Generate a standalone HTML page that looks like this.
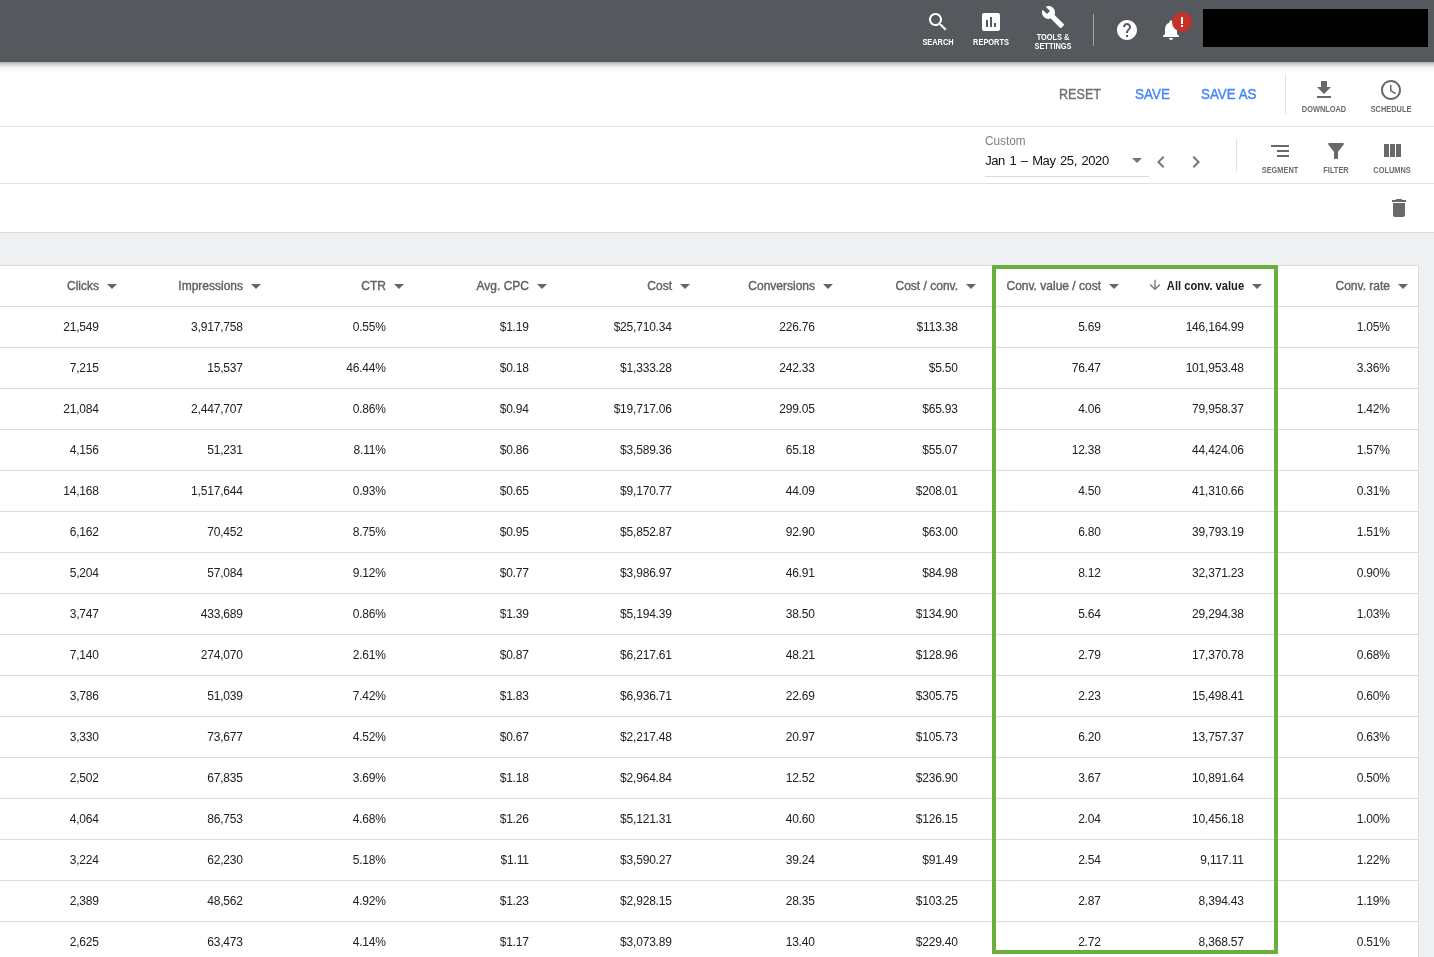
<!DOCTYPE html>
<html><head><meta charset="utf-8">
<style>
html,body{margin:0;padding:0;}
body{width:1434px;height:957px;overflow:hidden;position:relative;background:#fff;font-family:"Liberation Sans",sans-serif;}
.t{position:absolute;white-space:nowrap;}
.ic{position:absolute;display:block;}
.b{position:absolute;}
.med{-webkit-text-stroke:0.2px currentColor;}
#wrap{position:absolute;left:0;top:0;width:1434px;height:957px;overflow:hidden;will-change:transform;background:#fff;}
</style></head><body><div id="wrap">
<div class="b" style="left:0;top:233px;width:1434px;height:724px;background:#eff0f2;"></div>
<div class="b" style="left:0;top:126px;width:1434px;height:1px;background:#e0e0e0;"></div>
<div class="b" style="left:0;top:183px;width:1434px;height:1px;background:#e0e0e0;"></div>
<div class="b" style="left:0;top:232px;width:1434px;height:1px;background:#dadce0;"></div>
<div class="b" style="left:-2px;top:265px;width:1419px;height:700px;background:#fff;border:1px solid #dadce0;"></div>
<div class="b" style="left:0;top:306px;width:1418px;height:1px;background:#dadce0;"></div>
<div class="b" style="left:0;top:347px;width:1418px;height:1px;background:#dadce0;"></div>
<div class="b" style="left:0;top:388px;width:1418px;height:1px;background:#dadce0;"></div>
<div class="b" style="left:0;top:429px;width:1418px;height:1px;background:#dadce0;"></div>
<div class="b" style="left:0;top:470px;width:1418px;height:1px;background:#dadce0;"></div>
<div class="b" style="left:0;top:511px;width:1418px;height:1px;background:#dadce0;"></div>
<div class="b" style="left:0;top:552px;width:1418px;height:1px;background:#dadce0;"></div>
<div class="b" style="left:0;top:593px;width:1418px;height:1px;background:#dadce0;"></div>
<div class="b" style="left:0;top:634px;width:1418px;height:1px;background:#dadce0;"></div>
<div class="b" style="left:0;top:675px;width:1418px;height:1px;background:#dadce0;"></div>
<div class="b" style="left:0;top:716px;width:1418px;height:1px;background:#dadce0;"></div>
<div class="b" style="left:0;top:757px;width:1418px;height:1px;background:#dadce0;"></div>
<div class="b" style="left:0;top:798px;width:1418px;height:1px;background:#dadce0;"></div>
<div class="b" style="left:0;top:839px;width:1418px;height:1px;background:#dadce0;"></div>
<div class="b" style="left:0;top:880px;width:1418px;height:1px;background:#dadce0;"></div>
<div class="b" style="left:0;top:921px;width:1418px;height:1px;background:#dadce0;"></div>
<div class="t" style="top:279.84px;font-size:12px;line-height:12px;color:#5f6368;right:1335px;text-align:right;-webkit-text-stroke:0.4px currentColor;">Clicks</div>
<svg class="ic" style="left:99.7px;top:274px;width:24px;height:24px;" viewBox="0 0 24 24"><path fill="#666" d="M7 10l5 5 5-5z"/></svg>
<div class="t" style="top:279.84px;font-size:12px;line-height:12px;color:#5f6368;right:1191px;text-align:right;-webkit-text-stroke:0.4px currentColor;">Impressions</div>
<svg class="ic" style="left:243.7px;top:274px;width:24px;height:24px;" viewBox="0 0 24 24"><path fill="#666" d="M7 10l5 5 5-5z"/></svg>
<div class="t" style="top:279.84px;font-size:12px;line-height:12px;color:#5f6368;right:1048px;text-align:right;-webkit-text-stroke:0.4px currentColor;">CTR</div>
<svg class="ic" style="left:386.7px;top:274px;width:24px;height:24px;" viewBox="0 0 24 24"><path fill="#666" d="M7 10l5 5 5-5z"/></svg>
<div class="t" style="top:279.84px;font-size:12px;line-height:12px;color:#5f6368;right:905px;text-align:right;-webkit-text-stroke:0.4px currentColor;">Avg. CPC</div>
<svg class="ic" style="left:529.7px;top:274px;width:24px;height:24px;" viewBox="0 0 24 24"><path fill="#666" d="M7 10l5 5 5-5z"/></svg>
<div class="t" style="top:279.84px;font-size:12px;line-height:12px;color:#5f6368;right:762px;text-align:right;-webkit-text-stroke:0.4px currentColor;">Cost</div>
<svg class="ic" style="left:672.7px;top:274px;width:24px;height:24px;" viewBox="0 0 24 24"><path fill="#666" d="M7 10l5 5 5-5z"/></svg>
<div class="t" style="top:279.84px;font-size:12px;line-height:12px;color:#5f6368;right:619px;text-align:right;-webkit-text-stroke:0.4px currentColor;">Conversions</div>
<svg class="ic" style="left:815.7px;top:274px;width:24px;height:24px;" viewBox="0 0 24 24"><path fill="#666" d="M7 10l5 5 5-5z"/></svg>
<div class="t" style="top:279.84px;font-size:12px;line-height:12px;color:#5f6368;right:476px;text-align:right;-webkit-text-stroke:0.4px currentColor;">Cost / conv.</div>
<svg class="ic" style="left:958.7px;top:274px;width:24px;height:24px;" viewBox="0 0 24 24"><path fill="#666" d="M7 10l5 5 5-5z"/></svg>
<div class="t" style="top:279.84px;font-size:12px;line-height:12px;color:#5f6368;right:333px;text-align:right;-webkit-text-stroke:0.4px currentColor;">Conv. value / cost</div>
<svg class="ic" style="left:1101.7px;top:274px;width:24px;height:24px;" viewBox="0 0 24 24"><path fill="#666" d="M7 10l5 5 5-5z"/></svg>
<div class="t" style="top:279.84px;font-size:12px;line-height:12px;color:#202124;font-weight:bold;right:190px;text-align:right;transform:scaleX(0.93);transform-origin:right 50%;">All conv. value</div>
<svg class="ic" style="left:1146.6px;top:276.8px;width:16px;height:16px;" viewBox="0 0 24 24"><path fill="#757575" d="M20 12l-1.41-1.41L13 16.17V4h-2v12.17l-5.58-5.59L4 12l8 8 8-8z"/></svg>
<svg class="ic" style="left:1244.7px;top:274px;width:24px;height:24px;" viewBox="0 0 24 24"><path fill="#666" d="M7 10l5 5 5-5z"/></svg>
<div class="t" style="top:279.84px;font-size:12px;line-height:12px;color:#5f6368;right:44px;text-align:right;-webkit-text-stroke:0.4px currentColor;">Conv. rate</div>
<svg class="ic" style="left:1390.7px;top:274px;width:24px;height:24px;" viewBox="0 0 24 24"><path fill="#666" d="M7 10l5 5 5-5z"/></svg>
<div class="t" style="top:320.84px;font-size:12px;line-height:12px;color:#202124;letter-spacing:-0.2px;right:1335.3px;text-align:right;">21,549</div>
<div class="t" style="top:320.84px;font-size:12px;line-height:12px;color:#202124;letter-spacing:-0.2px;right:1191.3px;text-align:right;">3,917,758</div>
<div class="t" style="top:320.84px;font-size:12px;line-height:12px;color:#202124;letter-spacing:-0.2px;right:1048.3px;text-align:right;">0.55%</div>
<div class="t" style="top:320.84px;font-size:12px;line-height:12px;color:#202124;letter-spacing:-0.2px;right:905.3px;text-align:right;">$1.19</div>
<div class="t" style="top:320.84px;font-size:12px;line-height:12px;color:#202124;letter-spacing:-0.2px;right:762.3px;text-align:right;">$25,710.34</div>
<div class="t" style="top:320.84px;font-size:12px;line-height:12px;color:#202124;letter-spacing:-0.2px;right:619.3px;text-align:right;">226.76</div>
<div class="t" style="top:320.84px;font-size:12px;line-height:12px;color:#202124;letter-spacing:-0.2px;right:476.29999999999995px;text-align:right;">$113.38</div>
<div class="t" style="top:320.84px;font-size:12px;line-height:12px;color:#202124;letter-spacing:-0.2px;right:333.29999999999995px;text-align:right;">5.69</div>
<div class="t" style="top:320.84px;font-size:12px;line-height:12px;color:#202124;letter-spacing:-0.2px;right:190.29999999999995px;text-align:right;">146,164.99</div>
<div class="t" style="top:320.84px;font-size:12px;line-height:12px;color:#202124;letter-spacing:-0.2px;right:44.299999999999955px;text-align:right;">1.05%</div>
<div class="t" style="top:361.84px;font-size:12px;line-height:12px;color:#202124;letter-spacing:-0.2px;right:1335.3px;text-align:right;">7,215</div>
<div class="t" style="top:361.84px;font-size:12px;line-height:12px;color:#202124;letter-spacing:-0.2px;right:1191.3px;text-align:right;">15,537</div>
<div class="t" style="top:361.84px;font-size:12px;line-height:12px;color:#202124;letter-spacing:-0.2px;right:1048.3px;text-align:right;">46.44%</div>
<div class="t" style="top:361.84px;font-size:12px;line-height:12px;color:#202124;letter-spacing:-0.2px;right:905.3px;text-align:right;">$0.18</div>
<div class="t" style="top:361.84px;font-size:12px;line-height:12px;color:#202124;letter-spacing:-0.2px;right:762.3px;text-align:right;">$1,333.28</div>
<div class="t" style="top:361.84px;font-size:12px;line-height:12px;color:#202124;letter-spacing:-0.2px;right:619.3px;text-align:right;">242.33</div>
<div class="t" style="top:361.84px;font-size:12px;line-height:12px;color:#202124;letter-spacing:-0.2px;right:476.29999999999995px;text-align:right;">$5.50</div>
<div class="t" style="top:361.84px;font-size:12px;line-height:12px;color:#202124;letter-spacing:-0.2px;right:333.29999999999995px;text-align:right;">76.47</div>
<div class="t" style="top:361.84px;font-size:12px;line-height:12px;color:#202124;letter-spacing:-0.2px;right:190.29999999999995px;text-align:right;">101,953.48</div>
<div class="t" style="top:361.84px;font-size:12px;line-height:12px;color:#202124;letter-spacing:-0.2px;right:44.299999999999955px;text-align:right;">3.36%</div>
<div class="t" style="top:402.84px;font-size:12px;line-height:12px;color:#202124;letter-spacing:-0.2px;right:1335.3px;text-align:right;">21,084</div>
<div class="t" style="top:402.84px;font-size:12px;line-height:12px;color:#202124;letter-spacing:-0.2px;right:1191.3px;text-align:right;">2,447,707</div>
<div class="t" style="top:402.84px;font-size:12px;line-height:12px;color:#202124;letter-spacing:-0.2px;right:1048.3px;text-align:right;">0.86%</div>
<div class="t" style="top:402.84px;font-size:12px;line-height:12px;color:#202124;letter-spacing:-0.2px;right:905.3px;text-align:right;">$0.94</div>
<div class="t" style="top:402.84px;font-size:12px;line-height:12px;color:#202124;letter-spacing:-0.2px;right:762.3px;text-align:right;">$19,717.06</div>
<div class="t" style="top:402.84px;font-size:12px;line-height:12px;color:#202124;letter-spacing:-0.2px;right:619.3px;text-align:right;">299.05</div>
<div class="t" style="top:402.84px;font-size:12px;line-height:12px;color:#202124;letter-spacing:-0.2px;right:476.29999999999995px;text-align:right;">$65.93</div>
<div class="t" style="top:402.84px;font-size:12px;line-height:12px;color:#202124;letter-spacing:-0.2px;right:333.29999999999995px;text-align:right;">4.06</div>
<div class="t" style="top:402.84px;font-size:12px;line-height:12px;color:#202124;letter-spacing:-0.2px;right:190.29999999999995px;text-align:right;">79,958.37</div>
<div class="t" style="top:402.84px;font-size:12px;line-height:12px;color:#202124;letter-spacing:-0.2px;right:44.299999999999955px;text-align:right;">1.42%</div>
<div class="t" style="top:443.84px;font-size:12px;line-height:12px;color:#202124;letter-spacing:-0.2px;right:1335.3px;text-align:right;">4,156</div>
<div class="t" style="top:443.84px;font-size:12px;line-height:12px;color:#202124;letter-spacing:-0.2px;right:1191.3px;text-align:right;">51,231</div>
<div class="t" style="top:443.84px;font-size:12px;line-height:12px;color:#202124;letter-spacing:-0.2px;right:1048.3px;text-align:right;">8.11%</div>
<div class="t" style="top:443.84px;font-size:12px;line-height:12px;color:#202124;letter-spacing:-0.2px;right:905.3px;text-align:right;">$0.86</div>
<div class="t" style="top:443.84px;font-size:12px;line-height:12px;color:#202124;letter-spacing:-0.2px;right:762.3px;text-align:right;">$3,589.36</div>
<div class="t" style="top:443.84px;font-size:12px;line-height:12px;color:#202124;letter-spacing:-0.2px;right:619.3px;text-align:right;">65.18</div>
<div class="t" style="top:443.84px;font-size:12px;line-height:12px;color:#202124;letter-spacing:-0.2px;right:476.29999999999995px;text-align:right;">$55.07</div>
<div class="t" style="top:443.84px;font-size:12px;line-height:12px;color:#202124;letter-spacing:-0.2px;right:333.29999999999995px;text-align:right;">12.38</div>
<div class="t" style="top:443.84px;font-size:12px;line-height:12px;color:#202124;letter-spacing:-0.2px;right:190.29999999999995px;text-align:right;">44,424.06</div>
<div class="t" style="top:443.84px;font-size:12px;line-height:12px;color:#202124;letter-spacing:-0.2px;right:44.299999999999955px;text-align:right;">1.57%</div>
<div class="t" style="top:484.84px;font-size:12px;line-height:12px;color:#202124;letter-spacing:-0.2px;right:1335.3px;text-align:right;">14,168</div>
<div class="t" style="top:484.84px;font-size:12px;line-height:12px;color:#202124;letter-spacing:-0.2px;right:1191.3px;text-align:right;">1,517,644</div>
<div class="t" style="top:484.84px;font-size:12px;line-height:12px;color:#202124;letter-spacing:-0.2px;right:1048.3px;text-align:right;">0.93%</div>
<div class="t" style="top:484.84px;font-size:12px;line-height:12px;color:#202124;letter-spacing:-0.2px;right:905.3px;text-align:right;">$0.65</div>
<div class="t" style="top:484.84px;font-size:12px;line-height:12px;color:#202124;letter-spacing:-0.2px;right:762.3px;text-align:right;">$9,170.77</div>
<div class="t" style="top:484.84px;font-size:12px;line-height:12px;color:#202124;letter-spacing:-0.2px;right:619.3px;text-align:right;">44.09</div>
<div class="t" style="top:484.84px;font-size:12px;line-height:12px;color:#202124;letter-spacing:-0.2px;right:476.29999999999995px;text-align:right;">$208.01</div>
<div class="t" style="top:484.84px;font-size:12px;line-height:12px;color:#202124;letter-spacing:-0.2px;right:333.29999999999995px;text-align:right;">4.50</div>
<div class="t" style="top:484.84px;font-size:12px;line-height:12px;color:#202124;letter-spacing:-0.2px;right:190.29999999999995px;text-align:right;">41,310.66</div>
<div class="t" style="top:484.84px;font-size:12px;line-height:12px;color:#202124;letter-spacing:-0.2px;right:44.299999999999955px;text-align:right;">0.31%</div>
<div class="t" style="top:525.84px;font-size:12px;line-height:12px;color:#202124;letter-spacing:-0.2px;right:1335.3px;text-align:right;">6,162</div>
<div class="t" style="top:525.84px;font-size:12px;line-height:12px;color:#202124;letter-spacing:-0.2px;right:1191.3px;text-align:right;">70,452</div>
<div class="t" style="top:525.84px;font-size:12px;line-height:12px;color:#202124;letter-spacing:-0.2px;right:1048.3px;text-align:right;">8.75%</div>
<div class="t" style="top:525.84px;font-size:12px;line-height:12px;color:#202124;letter-spacing:-0.2px;right:905.3px;text-align:right;">$0.95</div>
<div class="t" style="top:525.84px;font-size:12px;line-height:12px;color:#202124;letter-spacing:-0.2px;right:762.3px;text-align:right;">$5,852.87</div>
<div class="t" style="top:525.84px;font-size:12px;line-height:12px;color:#202124;letter-spacing:-0.2px;right:619.3px;text-align:right;">92.90</div>
<div class="t" style="top:525.84px;font-size:12px;line-height:12px;color:#202124;letter-spacing:-0.2px;right:476.29999999999995px;text-align:right;">$63.00</div>
<div class="t" style="top:525.84px;font-size:12px;line-height:12px;color:#202124;letter-spacing:-0.2px;right:333.29999999999995px;text-align:right;">6.80</div>
<div class="t" style="top:525.84px;font-size:12px;line-height:12px;color:#202124;letter-spacing:-0.2px;right:190.29999999999995px;text-align:right;">39,793.19</div>
<div class="t" style="top:525.84px;font-size:12px;line-height:12px;color:#202124;letter-spacing:-0.2px;right:44.299999999999955px;text-align:right;">1.51%</div>
<div class="t" style="top:566.84px;font-size:12px;line-height:12px;color:#202124;letter-spacing:-0.2px;right:1335.3px;text-align:right;">5,204</div>
<div class="t" style="top:566.84px;font-size:12px;line-height:12px;color:#202124;letter-spacing:-0.2px;right:1191.3px;text-align:right;">57,084</div>
<div class="t" style="top:566.84px;font-size:12px;line-height:12px;color:#202124;letter-spacing:-0.2px;right:1048.3px;text-align:right;">9.12%</div>
<div class="t" style="top:566.84px;font-size:12px;line-height:12px;color:#202124;letter-spacing:-0.2px;right:905.3px;text-align:right;">$0.77</div>
<div class="t" style="top:566.84px;font-size:12px;line-height:12px;color:#202124;letter-spacing:-0.2px;right:762.3px;text-align:right;">$3,986.97</div>
<div class="t" style="top:566.84px;font-size:12px;line-height:12px;color:#202124;letter-spacing:-0.2px;right:619.3px;text-align:right;">46.91</div>
<div class="t" style="top:566.84px;font-size:12px;line-height:12px;color:#202124;letter-spacing:-0.2px;right:476.29999999999995px;text-align:right;">$84.98</div>
<div class="t" style="top:566.84px;font-size:12px;line-height:12px;color:#202124;letter-spacing:-0.2px;right:333.29999999999995px;text-align:right;">8.12</div>
<div class="t" style="top:566.84px;font-size:12px;line-height:12px;color:#202124;letter-spacing:-0.2px;right:190.29999999999995px;text-align:right;">32,371.23</div>
<div class="t" style="top:566.84px;font-size:12px;line-height:12px;color:#202124;letter-spacing:-0.2px;right:44.299999999999955px;text-align:right;">0.90%</div>
<div class="t" style="top:607.84px;font-size:12px;line-height:12px;color:#202124;letter-spacing:-0.2px;right:1335.3px;text-align:right;">3,747</div>
<div class="t" style="top:607.84px;font-size:12px;line-height:12px;color:#202124;letter-spacing:-0.2px;right:1191.3px;text-align:right;">433,689</div>
<div class="t" style="top:607.84px;font-size:12px;line-height:12px;color:#202124;letter-spacing:-0.2px;right:1048.3px;text-align:right;">0.86%</div>
<div class="t" style="top:607.84px;font-size:12px;line-height:12px;color:#202124;letter-spacing:-0.2px;right:905.3px;text-align:right;">$1.39</div>
<div class="t" style="top:607.84px;font-size:12px;line-height:12px;color:#202124;letter-spacing:-0.2px;right:762.3px;text-align:right;">$5,194.39</div>
<div class="t" style="top:607.84px;font-size:12px;line-height:12px;color:#202124;letter-spacing:-0.2px;right:619.3px;text-align:right;">38.50</div>
<div class="t" style="top:607.84px;font-size:12px;line-height:12px;color:#202124;letter-spacing:-0.2px;right:476.29999999999995px;text-align:right;">$134.90</div>
<div class="t" style="top:607.84px;font-size:12px;line-height:12px;color:#202124;letter-spacing:-0.2px;right:333.29999999999995px;text-align:right;">5.64</div>
<div class="t" style="top:607.84px;font-size:12px;line-height:12px;color:#202124;letter-spacing:-0.2px;right:190.29999999999995px;text-align:right;">29,294.38</div>
<div class="t" style="top:607.84px;font-size:12px;line-height:12px;color:#202124;letter-spacing:-0.2px;right:44.299999999999955px;text-align:right;">1.03%</div>
<div class="t" style="top:648.84px;font-size:12px;line-height:12px;color:#202124;letter-spacing:-0.2px;right:1335.3px;text-align:right;">7,140</div>
<div class="t" style="top:648.84px;font-size:12px;line-height:12px;color:#202124;letter-spacing:-0.2px;right:1191.3px;text-align:right;">274,070</div>
<div class="t" style="top:648.84px;font-size:12px;line-height:12px;color:#202124;letter-spacing:-0.2px;right:1048.3px;text-align:right;">2.61%</div>
<div class="t" style="top:648.84px;font-size:12px;line-height:12px;color:#202124;letter-spacing:-0.2px;right:905.3px;text-align:right;">$0.87</div>
<div class="t" style="top:648.84px;font-size:12px;line-height:12px;color:#202124;letter-spacing:-0.2px;right:762.3px;text-align:right;">$6,217.61</div>
<div class="t" style="top:648.84px;font-size:12px;line-height:12px;color:#202124;letter-spacing:-0.2px;right:619.3px;text-align:right;">48.21</div>
<div class="t" style="top:648.84px;font-size:12px;line-height:12px;color:#202124;letter-spacing:-0.2px;right:476.29999999999995px;text-align:right;">$128.96</div>
<div class="t" style="top:648.84px;font-size:12px;line-height:12px;color:#202124;letter-spacing:-0.2px;right:333.29999999999995px;text-align:right;">2.79</div>
<div class="t" style="top:648.84px;font-size:12px;line-height:12px;color:#202124;letter-spacing:-0.2px;right:190.29999999999995px;text-align:right;">17,370.78</div>
<div class="t" style="top:648.84px;font-size:12px;line-height:12px;color:#202124;letter-spacing:-0.2px;right:44.299999999999955px;text-align:right;">0.68%</div>
<div class="t" style="top:689.84px;font-size:12px;line-height:12px;color:#202124;letter-spacing:-0.2px;right:1335.3px;text-align:right;">3,786</div>
<div class="t" style="top:689.84px;font-size:12px;line-height:12px;color:#202124;letter-spacing:-0.2px;right:1191.3px;text-align:right;">51,039</div>
<div class="t" style="top:689.84px;font-size:12px;line-height:12px;color:#202124;letter-spacing:-0.2px;right:1048.3px;text-align:right;">7.42%</div>
<div class="t" style="top:689.84px;font-size:12px;line-height:12px;color:#202124;letter-spacing:-0.2px;right:905.3px;text-align:right;">$1.83</div>
<div class="t" style="top:689.84px;font-size:12px;line-height:12px;color:#202124;letter-spacing:-0.2px;right:762.3px;text-align:right;">$6,936.71</div>
<div class="t" style="top:689.84px;font-size:12px;line-height:12px;color:#202124;letter-spacing:-0.2px;right:619.3px;text-align:right;">22.69</div>
<div class="t" style="top:689.84px;font-size:12px;line-height:12px;color:#202124;letter-spacing:-0.2px;right:476.29999999999995px;text-align:right;">$305.75</div>
<div class="t" style="top:689.84px;font-size:12px;line-height:12px;color:#202124;letter-spacing:-0.2px;right:333.29999999999995px;text-align:right;">2.23</div>
<div class="t" style="top:689.84px;font-size:12px;line-height:12px;color:#202124;letter-spacing:-0.2px;right:190.29999999999995px;text-align:right;">15,498.41</div>
<div class="t" style="top:689.84px;font-size:12px;line-height:12px;color:#202124;letter-spacing:-0.2px;right:44.299999999999955px;text-align:right;">0.60%</div>
<div class="t" style="top:730.84px;font-size:12px;line-height:12px;color:#202124;letter-spacing:-0.2px;right:1335.3px;text-align:right;">3,330</div>
<div class="t" style="top:730.84px;font-size:12px;line-height:12px;color:#202124;letter-spacing:-0.2px;right:1191.3px;text-align:right;">73,677</div>
<div class="t" style="top:730.84px;font-size:12px;line-height:12px;color:#202124;letter-spacing:-0.2px;right:1048.3px;text-align:right;">4.52%</div>
<div class="t" style="top:730.84px;font-size:12px;line-height:12px;color:#202124;letter-spacing:-0.2px;right:905.3px;text-align:right;">$0.67</div>
<div class="t" style="top:730.84px;font-size:12px;line-height:12px;color:#202124;letter-spacing:-0.2px;right:762.3px;text-align:right;">$2,217.48</div>
<div class="t" style="top:730.84px;font-size:12px;line-height:12px;color:#202124;letter-spacing:-0.2px;right:619.3px;text-align:right;">20.97</div>
<div class="t" style="top:730.84px;font-size:12px;line-height:12px;color:#202124;letter-spacing:-0.2px;right:476.29999999999995px;text-align:right;">$105.73</div>
<div class="t" style="top:730.84px;font-size:12px;line-height:12px;color:#202124;letter-spacing:-0.2px;right:333.29999999999995px;text-align:right;">6.20</div>
<div class="t" style="top:730.84px;font-size:12px;line-height:12px;color:#202124;letter-spacing:-0.2px;right:190.29999999999995px;text-align:right;">13,757.37</div>
<div class="t" style="top:730.84px;font-size:12px;line-height:12px;color:#202124;letter-spacing:-0.2px;right:44.299999999999955px;text-align:right;">0.63%</div>
<div class="t" style="top:771.84px;font-size:12px;line-height:12px;color:#202124;letter-spacing:-0.2px;right:1335.3px;text-align:right;">2,502</div>
<div class="t" style="top:771.84px;font-size:12px;line-height:12px;color:#202124;letter-spacing:-0.2px;right:1191.3px;text-align:right;">67,835</div>
<div class="t" style="top:771.84px;font-size:12px;line-height:12px;color:#202124;letter-spacing:-0.2px;right:1048.3px;text-align:right;">3.69%</div>
<div class="t" style="top:771.84px;font-size:12px;line-height:12px;color:#202124;letter-spacing:-0.2px;right:905.3px;text-align:right;">$1.18</div>
<div class="t" style="top:771.84px;font-size:12px;line-height:12px;color:#202124;letter-spacing:-0.2px;right:762.3px;text-align:right;">$2,964.84</div>
<div class="t" style="top:771.84px;font-size:12px;line-height:12px;color:#202124;letter-spacing:-0.2px;right:619.3px;text-align:right;">12.52</div>
<div class="t" style="top:771.84px;font-size:12px;line-height:12px;color:#202124;letter-spacing:-0.2px;right:476.29999999999995px;text-align:right;">$236.90</div>
<div class="t" style="top:771.84px;font-size:12px;line-height:12px;color:#202124;letter-spacing:-0.2px;right:333.29999999999995px;text-align:right;">3.67</div>
<div class="t" style="top:771.84px;font-size:12px;line-height:12px;color:#202124;letter-spacing:-0.2px;right:190.29999999999995px;text-align:right;">10,891.64</div>
<div class="t" style="top:771.84px;font-size:12px;line-height:12px;color:#202124;letter-spacing:-0.2px;right:44.299999999999955px;text-align:right;">0.50%</div>
<div class="t" style="top:812.84px;font-size:12px;line-height:12px;color:#202124;letter-spacing:-0.2px;right:1335.3px;text-align:right;">4,064</div>
<div class="t" style="top:812.84px;font-size:12px;line-height:12px;color:#202124;letter-spacing:-0.2px;right:1191.3px;text-align:right;">86,753</div>
<div class="t" style="top:812.84px;font-size:12px;line-height:12px;color:#202124;letter-spacing:-0.2px;right:1048.3px;text-align:right;">4.68%</div>
<div class="t" style="top:812.84px;font-size:12px;line-height:12px;color:#202124;letter-spacing:-0.2px;right:905.3px;text-align:right;">$1.26</div>
<div class="t" style="top:812.84px;font-size:12px;line-height:12px;color:#202124;letter-spacing:-0.2px;right:762.3px;text-align:right;">$5,121.31</div>
<div class="t" style="top:812.84px;font-size:12px;line-height:12px;color:#202124;letter-spacing:-0.2px;right:619.3px;text-align:right;">40.60</div>
<div class="t" style="top:812.84px;font-size:12px;line-height:12px;color:#202124;letter-spacing:-0.2px;right:476.29999999999995px;text-align:right;">$126.15</div>
<div class="t" style="top:812.84px;font-size:12px;line-height:12px;color:#202124;letter-spacing:-0.2px;right:333.29999999999995px;text-align:right;">2.04</div>
<div class="t" style="top:812.84px;font-size:12px;line-height:12px;color:#202124;letter-spacing:-0.2px;right:190.29999999999995px;text-align:right;">10,456.18</div>
<div class="t" style="top:812.84px;font-size:12px;line-height:12px;color:#202124;letter-spacing:-0.2px;right:44.299999999999955px;text-align:right;">1.00%</div>
<div class="t" style="top:853.84px;font-size:12px;line-height:12px;color:#202124;letter-spacing:-0.2px;right:1335.3px;text-align:right;">3,224</div>
<div class="t" style="top:853.84px;font-size:12px;line-height:12px;color:#202124;letter-spacing:-0.2px;right:1191.3px;text-align:right;">62,230</div>
<div class="t" style="top:853.84px;font-size:12px;line-height:12px;color:#202124;letter-spacing:-0.2px;right:1048.3px;text-align:right;">5.18%</div>
<div class="t" style="top:853.84px;font-size:12px;line-height:12px;color:#202124;letter-spacing:-0.2px;right:905.3px;text-align:right;">$1.11</div>
<div class="t" style="top:853.84px;font-size:12px;line-height:12px;color:#202124;letter-spacing:-0.2px;right:762.3px;text-align:right;">$3,590.27</div>
<div class="t" style="top:853.84px;font-size:12px;line-height:12px;color:#202124;letter-spacing:-0.2px;right:619.3px;text-align:right;">39.24</div>
<div class="t" style="top:853.84px;font-size:12px;line-height:12px;color:#202124;letter-spacing:-0.2px;right:476.29999999999995px;text-align:right;">$91.49</div>
<div class="t" style="top:853.84px;font-size:12px;line-height:12px;color:#202124;letter-spacing:-0.2px;right:333.29999999999995px;text-align:right;">2.54</div>
<div class="t" style="top:853.84px;font-size:12px;line-height:12px;color:#202124;letter-spacing:-0.2px;right:190.29999999999995px;text-align:right;">9,117.11</div>
<div class="t" style="top:853.84px;font-size:12px;line-height:12px;color:#202124;letter-spacing:-0.2px;right:44.299999999999955px;text-align:right;">1.22%</div>
<div class="t" style="top:894.84px;font-size:12px;line-height:12px;color:#202124;letter-spacing:-0.2px;right:1335.3px;text-align:right;">2,389</div>
<div class="t" style="top:894.84px;font-size:12px;line-height:12px;color:#202124;letter-spacing:-0.2px;right:1191.3px;text-align:right;">48,562</div>
<div class="t" style="top:894.84px;font-size:12px;line-height:12px;color:#202124;letter-spacing:-0.2px;right:1048.3px;text-align:right;">4.92%</div>
<div class="t" style="top:894.84px;font-size:12px;line-height:12px;color:#202124;letter-spacing:-0.2px;right:905.3px;text-align:right;">$1.23</div>
<div class="t" style="top:894.84px;font-size:12px;line-height:12px;color:#202124;letter-spacing:-0.2px;right:762.3px;text-align:right;">$2,928.15</div>
<div class="t" style="top:894.84px;font-size:12px;line-height:12px;color:#202124;letter-spacing:-0.2px;right:619.3px;text-align:right;">28.35</div>
<div class="t" style="top:894.84px;font-size:12px;line-height:12px;color:#202124;letter-spacing:-0.2px;right:476.29999999999995px;text-align:right;">$103.25</div>
<div class="t" style="top:894.84px;font-size:12px;line-height:12px;color:#202124;letter-spacing:-0.2px;right:333.29999999999995px;text-align:right;">2.87</div>
<div class="t" style="top:894.84px;font-size:12px;line-height:12px;color:#202124;letter-spacing:-0.2px;right:190.29999999999995px;text-align:right;">8,394.43</div>
<div class="t" style="top:894.84px;font-size:12px;line-height:12px;color:#202124;letter-spacing:-0.2px;right:44.299999999999955px;text-align:right;">1.19%</div>
<div class="t" style="top:935.84px;font-size:12px;line-height:12px;color:#202124;letter-spacing:-0.2px;right:1335.3px;text-align:right;">2,625</div>
<div class="t" style="top:935.84px;font-size:12px;line-height:12px;color:#202124;letter-spacing:-0.2px;right:1191.3px;text-align:right;">63,473</div>
<div class="t" style="top:935.84px;font-size:12px;line-height:12px;color:#202124;letter-spacing:-0.2px;right:1048.3px;text-align:right;">4.14%</div>
<div class="t" style="top:935.84px;font-size:12px;line-height:12px;color:#202124;letter-spacing:-0.2px;right:905.3px;text-align:right;">$1.17</div>
<div class="t" style="top:935.84px;font-size:12px;line-height:12px;color:#202124;letter-spacing:-0.2px;right:762.3px;text-align:right;">$3,073.89</div>
<div class="t" style="top:935.84px;font-size:12px;line-height:12px;color:#202124;letter-spacing:-0.2px;right:619.3px;text-align:right;">13.40</div>
<div class="t" style="top:935.84px;font-size:12px;line-height:12px;color:#202124;letter-spacing:-0.2px;right:476.29999999999995px;text-align:right;">$229.40</div>
<div class="t" style="top:935.84px;font-size:12px;line-height:12px;color:#202124;letter-spacing:-0.2px;right:333.29999999999995px;text-align:right;">2.72</div>
<div class="t" style="top:935.84px;font-size:12px;line-height:12px;color:#202124;letter-spacing:-0.2px;right:190.29999999999995px;text-align:right;">8,368.57</div>
<div class="t" style="top:935.84px;font-size:12px;line-height:12px;color:#202124;letter-spacing:-0.2px;right:44.299999999999955px;text-align:right;">0.51%</div>
<div class="b" style="left:1419px;top:265px;width:15px;height:692px;background:#eff0f2;"></div>
<div class="b" style="left:992px;top:265px;width:278px;height:681px;border:4px solid #6aae3e;"></div>
<div class="b" style="left:-30px;top:0;width:1494px;height:62px;background:#55585d;box-shadow:0 2px 4px rgba(0,0,0,.28),0 3px 9px rgba(0,0,0,.12);"></div>
<svg class="ic" style="left:926px;top:10px;width:24px;height:24px;" viewBox="0 0 24 24"><path fill="#fff" d="M15.5 14h-.79l-.28-.27C15.41 12.59 16 11.11 16 9.5 16 5.91 13.09 3 9.5 3S3 5.91 3 9.5 5.91 16 9.5 16c1.61 0 3.09-.59 4.23-1.57l.27.28v.79l5 4.99L20.49 19l-4.99-5zm-6 0C7.010 14 5 11.99 5 9.5S7.01 5 9.5 5 14 7.01 14 9.5 11.99 14 9.5 14z"/></svg>
<div class="t" style="top:37.80px;font-size:8.5px;line-height:8.5px;color:#fff;font-weight:bold;left:907.5px;width:60px;text-align:center;transform:scaleX(0.87);transform-origin:center 50%;">SEARCH</div>
<svg class="ic" style="left:979px;top:10px;width:24px;height:24px;" viewBox="0 0 24 24"><path fill="#fff" d="M19 3H5c-1.1 0-2 .9-2 2v14c0 1.1.9 2 2 2h14c1.1 0 2-.9 2-2V5c0-1.1-.9-2-2-2zM9 17H7v-7h2v7zm4 0h-2V7h2v10zm4 0h-2v-4h2v4z"/></svg>
<div class="t" style="top:37.80px;font-size:8.5px;line-height:8.5px;color:#fff;font-weight:bold;left:961.3px;width:60px;text-align:center;transform:scaleX(0.87);transform-origin:center 50%;">REPORTS</div>
<svg class="ic" style="left:1040.7px;top:4.5px;width:24px;height:24px;" viewBox="0 0 24 24"><path fill="#fff" d="M22.7 19l-9.1-9.1c.9-2.3.4-5-1.5-6.9-2-2-5-2.4-7.4-1.3L9 6 6 9 1.6 4.7C.4 7.1.9 10.1 2.9 12.1c1.9 1.9 4.6 2.4 6.9 1.5l9.1 9.1c.4.4 1 .4 1.4 0l2.3-2.3c.5-.4.5-1.1.1-1.4z"/></svg>
<div class="t" style="top:32.60px;font-size:8.5px;line-height:8.5px;color:#fff;font-weight:bold;left:1023.0px;width:60px;text-align:center;transform:scaleX(0.87);transform-origin:center 50%;">TOOLS &amp;</div>
<div class="t" style="top:41.80px;font-size:8.5px;line-height:8.5px;color:#fff;font-weight:bold;left:1023.0px;width:60px;text-align:center;transform:scaleX(0.87);transform-origin:center 50%;">SETTINGS</div>
<div class="b" style="left:1093px;top:14px;width:1px;height:32px;background:rgba(255,255,255,.45);"></div>
<svg class="ic" style="left:1115px;top:18px;width:24px;height:24px;" viewBox="0 0 24 24"><path fill="#fff" d="M12 2C6.48 2 2 6.48 2 12s4.48 10 10 10 10-4.48 10-10S17.52 2 12 2zm1 17h-2v-2h2v2zm2.07-7.75l-.9.92C13.45 12.9 13 13.5 13 15h-2v-.5c0-1.1.45-2.1 1.17-2.83l1.24-1.26c.37-.36.59-.86.59-1.41 0-1.1-.9-2-2-2s-2 .9-2 2H8c0-2.21 1.79-4 4-4s4 1.79 4 4c0 .88-.36 1.68-.93 2.25z"/></svg>
<svg class="ic" style="left:1158.5px;top:18px;width:24px;height:24px;" viewBox="0 0 24 24"><path fill="#fff" d="M12 22c1.1 0 2-.9 2-2h-4c0 1.1.89 2 2 2zm6-6v-5c0-3.07-1.64-5.64-4.5-6.32V4c0-.83-.67-1.5-1.5-1.5s-1.5.67-1.5 1.5v.68C7.63 5.36 6 7.92 6 11v5l-2 2v1h16v-1l-2-2z"/></svg>
<div class="b" style="left:1172px;top:12px;width:20px;height:20px;border-radius:50%;background:#c5322a;"></div>
<div class="b" style="left:1180.8px;top:17px;width:2.5px;height:6.5px;background:#fff;"></div>
<div class="b" style="left:1180.8px;top:25px;width:2.5px;height:2.2px;background:#fff;"></div>
<div class="b" style="left:1203px;top:9px;width:225px;height:38px;background:#000;"></div>
<div class="t" style="top:87.15px;font-size:14px;line-height:14px;color:#707070;left:1059.2px;transform:scaleX(0.9);transform-origin:left 50%;-webkit-text-stroke:0.35px currentColor;">RESET</div>
<div class="t" style="top:87.15px;font-size:14px;line-height:14px;color:#4285f4;left:1135.1px;transform:scaleX(0.965);transform-origin:left 50%;-webkit-text-stroke:0.35px currentColor;">SAVE</div>
<div class="t" style="top:87.15px;font-size:14px;line-height:14px;color:#4285f4;left:1200.7px;transform:scaleX(0.955);transform-origin:left 50%;-webkit-text-stroke:0.35px currentColor;">SAVE AS</div>
<div class="b" style="left:1285px;top:74px;width:1px;height:40px;background:#e0e0e0;"></div>
<svg class="ic" style="left:1312px;top:78px;width:24px;height:24px;" viewBox="0 0 24 24"><path fill="#696969" d="M19 9h-4V3H9v6H5l7 7 7-7zM5 18v2h14v-2H5z"/></svg>
<div class="t" style="top:104.80px;font-size:8.5px;line-height:8.5px;color:#6b6b6b;font-weight:bold;left:1284.0px;width:80px;text-align:center;transform:scaleX(0.87);transform-origin:center 50%;">DOWNLOAD</div>
<svg class="ic" style="left:1379px;top:78px;width:24px;height:24px;" viewBox="0 0 24 24"><path fill="#696969" d="M11.99 2C6.47 2 2 6.48 2 12s4.47 10 9.99 10C17.52 22 22 17.52 22 12S17.52 2 11.99 2zM12 20c-4.42 0-8-3.58-8-8s3.58-8 8-8 8 3.58 8 8-3.58 8-8 8zm.5-13H11v6l5.25 3.15.75-1.23-4.5-2.67z"/></svg>
<div class="t" style="top:104.80px;font-size:8.5px;line-height:8.5px;color:#6b6b6b;font-weight:bold;left:1350.7px;width:80px;text-align:center;transform:scaleX(0.87);transform-origin:center 50%;">SCHEDULE</div>
<div class="t" style="top:134.94px;font-size:12px;line-height:12px;color:#7d8085;left:985.4px;transform:scaleX(0.98);transform-origin:left 50%;">Custom</div>
<div class="t" style="top:154.20px;font-size:13px;line-height:13px;color:#111;letter-spacing:-0.4px;left:985.2px;word-spacing:1.3px;">Jan 1 – May 25, 2020</div>
<svg class="ic" style="left:1125px;top:147.7px;width:24px;height:24px;" viewBox="0 0 24 24"><path fill="#757575" d="M7 10l5 5 5-5z"/></svg>
<div class="b" style="left:985px;top:176px;width:164px;height:1px;background:#dadce0;"></div>
<svg class="ic" style="left:1149px;top:150px;width:24px;height:24px;" viewBox="0 0 24 24"><path fill="#757575" d="M15.41 7.41L14 6l-6 6 6 6 1.41-1.41L10.83 12z"/></svg>
<svg class="ic" style="left:1184.3px;top:150px;width:24px;height:24px;" viewBox="0 0 24 24"><path fill="#757575" d="M10 6L8.59 7.41 13.17 12l-4.58 4.59L10 18l6-6z"/></svg>
<div class="b" style="left:1236px;top:139px;width:1px;height:32px;background:#e0e0e0;"></div>
<div class="b" style="left:1271px;top:145px;width:18px;height:2px;background:#696969;"></div>
<div class="b" style="left:1277px;top:150px;width:12px;height:2px;background:#696969;"></div>
<div class="b" style="left:1277px;top:155px;width:12px;height:2px;background:#696969;"></div>
<div class="t" style="top:165.50px;font-size:8.5px;line-height:8.5px;color:#6b6b6b;font-weight:bold;left:1240.0px;width:80px;text-align:center;transform:scaleX(0.87);transform-origin:center 50%;">SEGMENT</div>
<svg class="ic" style="left:1323.5px;top:138.8px;width:24px;height:24px;" viewBox="0 0 24 24"><path fill="#696969" d="M4.25 5.61C6.27 8.2 10 13 10 13v6c0 .55.45 1 1 1h2c.55 0 1-.45 1-1v-6s3.72-4.8 5.74-7.39c.51-.66.04-1.61-.79-1.61H5.04c-.83 0-1.3.95-.79 1.61z"/></svg>
<div class="t" style="top:165.50px;font-size:8.5px;line-height:8.5px;color:#6b6b6b;font-weight:bold;left:1295.6px;width:80px;text-align:center;transform:scaleX(0.87);transform-origin:center 50%;">FILTER</div>
<svg class="ic" style="left:1379.6px;top:139px;width:24px;height:24px;" viewBox="0 0 24 24"><path fill="#696969" d="M10 18h5V5h-5v13zm-6 0h5V5H4v13zM16 5v13h5V5h-5z"/></svg>
<div class="t" style="top:165.50px;font-size:8.5px;line-height:8.5px;color:#6b6b6b;font-weight:bold;left:1351.7px;width:80px;text-align:center;transform:scaleX(0.87);transform-origin:center 50%;">COLUMNS</div>
<svg class="ic" style="left:1387px;top:196px;width:24px;height:24px;" viewBox="0 0 24 24"><path fill="#696969" d="M6 19c0 1.1.9 2 2 2h8c1.1 0 2-.9 2-2V7H6v12zM19 4h-3.5l-1-1h-5l-1 1H5v2h14V4z"/></svg>
</div></body></html>
